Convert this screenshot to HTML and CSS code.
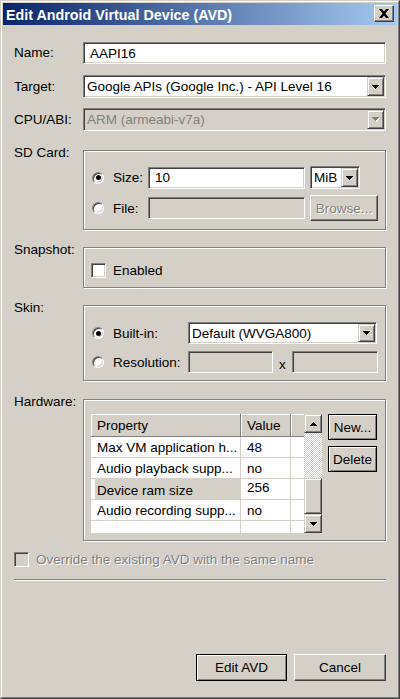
FILE: index.html
```html
<!DOCTYPE html>
<html>
<head>
<meta charset="utf-8">
<title>Edit Android Virtual Device (AVD)</title>
<link rel="stylesheet" href="styles.css">
</head>
<body>
<div class="window">
  <div class="window-inner">
    <div class="titlebar">
      <span class="title">Edit Android Virtual Device (AVD)</span>
      <div class="close-btn">
        <svg width="10" height="9" viewBox="0 0 10 9"><path d="M0 0h3l2 2.5 2-2.5h3l-3.5 4.5 3.5 4.5h-3l-2-2.5-2 2.5h-3l3.5-4.5z" fill="#000"/></svg>
      </div>
    </div>
    <div class="content">
      <div class="row r-name">
        <div class="label">Name:</div>
        <div class="sunken field fill">AAPI16</div>
      </div>
      <div class="row r-target">
        <div class="label">Target:</div>
        <div class="sunken combo fill">
          <span class="combo-text">Google APIs (Google Inc.) - API Level 16</span>
          <span class="raised combo-btn"><svg width="7" height="4" viewBox="0 0 7 4"><path d="M0 0h7v1h-1v1h-1v1h-1v1h-1v-1h-1v-1h-1v-1h-1z" fill="#000"/></svg></span>
        </div>
      </div>
      <div class="row r-cpu">
        <div class="label">CPU/ABI:</div>
        <div class="sunken combo fill disabled">
          <span class="combo-text">ARM (armeabi-v7a)</span>
          <span class="raised combo-btn"><svg width="8" height="5" viewBox="0 0 8 5"><path d="M1 1h7v1h-1v1h-1v1h-1v1h-1v-1h-1v-1h-1v-1h-1z" fill="#fff"/><path d="M0 0h7v1h-1v1h-1v1h-1v1h-1v-1h-1v-1h-1v-1h-1z" fill="#808080"/></svg></span>
        </div>
      </div>

      <div class="row grp-row r-sd">
        <div class="label glabel">SD Card:</div>
        <div class="group sd-group">
          <div class="grow g-size">
            <div class="opt sd-opt"><span class="radio checked"></span><span>Size:</span></div>
            <div class="sunken field sd-field">10</div>
            <div class="sunken combo mib">
              <span class="combo-text">MiB</span>
              <span class="raised combo-btn"><svg width="7" height="4" viewBox="0 0 7 4"><path d="M0 0h7v1h-1v1h-1v1h-1v1h-1v-1h-1v-1h-1v-1h-1z" fill="#000"/></svg></span>
            </div>
          </div>
          <div class="grow g-file">
            <div class="opt sd-opt"><span class="radio"></span><span>File:</span></div>
            <div class="sunken field sd-field disabled"></div>
            <div class="button browse disabled-text">Browse...</div>
          </div>
        </div>
      </div>

      <div class="row grp-row r-snap">
        <div class="label glabel">Snapshot:</div>
        <div class="group snap-group">
          <div class="grow check-row">
            <span class="checkbox"></span><span>Enabled</span>
          </div>
        </div>
      </div>

      <div class="row grp-row r-skin">
        <div class="label glabel">Skin:</div>
        <div class="group skin-group">
          <div class="grow">
            <div class="opt skin-opt"><span class="radio checked"></span><span>Built-in:</span></div>
            <div class="sunken combo skin-combo">
              <span class="combo-text">Default (WVGA800)</span>
              <span class="raised combo-btn"><svg width="7" height="4" viewBox="0 0 7 4"><path d="M0 0h7v1h-1v1h-1v1h-1v1h-1v-1h-1v-1h-1v-1h-1z" fill="#000"/></svg></span>
            </div>
          </div>
          <div class="grow">
            <div class="opt skin-opt"><span class="radio"></span><span>Resolution:</span></div>
            <div class="sunken field res-w disabled"></div>
            <div class="times">x</div>
            <div class="sunken field res-h disabled"></div>
          </div>
        </div>
      </div>

      <div class="row grp-row r-hw">
        <div class="label glabel">Hardware:</div>
        <div class="group hw-group">
          <div class="table-wrap">
            <div class="table">
              <div class="trow thead">
                <div class="tc c1">Property</div>
                <div class="tc c2">Value</div>
                <div class="tc c3"></div>
              </div>
              <div class="trow">
                <div class="tc c1">Max VM application h...</div>
                <div class="tc c2">48</div>
                <div class="tc c3"></div>
              </div>
              <div class="trow">
                <div class="tc c1">Audio playback supp...</div>
                <div class="tc c2">no</div>
                <div class="tc c3"></div>
              </div>
              <div class="trow selected">
                <div class="tc c1"><span class="sel">Device ram size</span></div>
                <div class="tc c2 editing">256</div>
                <div class="tc c3"></div>
              </div>
              <div class="trow">
                <div class="tc c1">Audio recording supp...</div>
                <div class="tc c2">no</div>
                <div class="tc c3"></div>
              </div>
              <div class="trow last">
                <div class="tc c1"></div>
                <div class="tc c2"></div>
                <div class="tc c3"></div>
              </div>
            </div>
            <div class="scrollbar">
              <div class="raised sb-btn"><svg width="7" height="4" viewBox="0 0 7 4"><path d="M3 0h1v1h1v1h1v1h1v1h-7v-1h1v-1h1v-1h1z" fill="#000"/></svg></div>
              <div class="sb-track"></div>
              <div class="raised sb-thumb"></div>
              <div class="raised sb-btn"><svg width="7" height="4" viewBox="0 0 7 4"><path d="M0 0h7v1h-1v1h-1v1h-1v1h-1v-1h-1v-1h-1v-1h-1z" fill="#000"/></svg></div>
            </div>
          </div>
          <div class="hw-buttons">
            <div class="button default">New...</div>
            <div class="button default">Delete</div>
          </div>
        </div>
      </div>

      <div class="override">
        <span class="checkbox disabled"></span><span class="disabled-text">Override the existing AVD with the same name</span>
      </div>
      <div class="separator"></div>
      <div class="actions">
        <div class="button default action">Edit AVD</div>
        <div class="button action cancel">Cancel</div>
      </div>
    </div>
  </div>
</div>
</body>
</html>
```

FILE: styles.css
```css
* { box-sizing: border-box; }
html, body { margin: 0; padding: 0; }
body {
  width: 400px;
  height: 699px;
  overflow: hidden;
  background: #d4d0c8;
  font-family: "Liberation Sans", Arial, sans-serif;
  font-size: 13.5px;
  color: #000;
}

.window {
  width: 400px;
  height: 699px;
  border: 1px solid;
  border-color: #d4d0c8 #404040 #404040 #d4d0c8;
  background: #d4d0c8;
  display: flex;
  flex-direction: column;
}
.window-inner {
  flex: 1;
  border: 1px solid;
  border-color: #fff #808080 #808080 #fff;
  padding: 1px;
  display: flex;
  flex-direction: column;
}

.titlebar {
  height: 22px;
  background: linear-gradient(to right, #0a246a, #a6caf0);
  display: flex;
  align-items: flex-start;
  justify-content: space-between;
  padding-left: 3px;
}
.title {
  color: #fff;
  font-weight: bold;
  font-size: 14.3px;
  line-height: 20px;
  padding-top: 2px;
  white-space: nowrap;
}
.close-btn {
  width: 20px;
  height: 17px;
  margin: 2px 3px 0 0;
  background: #d4d0c8;
  border: 1px solid;
  border-color: #fff #404040 #404040 #fff;
  box-shadow: inset -1px -1px #808080;
  display: flex;
  align-items: center;
  justify-content: center;
}

.content {
  padding: 0 11px;
  display: flex;
  flex-direction: column;
}

.row {
  display: flex;
  align-items: center;
}
.label {
  width: 69px;
  flex-shrink: 0;
  line-height: 16px;
  white-space: nowrap;
}
.fill { flex: 1; }
.grp-row { align-items: flex-start; }
.glabel { margin-top: -5px; }

.r-name { margin-top: 17px; }
.r-target { margin-top: 11px; }
.r-cpu { margin-top: 10px; }
.r-sd { margin-top: 19px; }
.r-snap { margin-top: 17px; }
.r-skin { margin-top: 17px; }
.r-hw { margin-top: 18px; }

/* sunken controls */
.sunken {
  background: #fff;
  border: 1px solid;
  border-color: #808080 #fff #fff #808080;
  box-shadow: inset 1px 1px #404040, inset -1px -1px #d4d0c8;
  padding: 1px;
  white-space: nowrap;
  overflow: hidden;
  flex-shrink: 0;
}
.sunken.fill { flex: 1 1 auto; }
.sunken.disabled { background: #d4d0c8; color: #808080; }

.field {
  height: 22px;
  display: flex;
  align-items: center;
  padding-left: 6px;
}
.combo {
  height: 23px;
  display: flex;
  align-items: stretch;
}
.combo-text {
  flex: 1;
  display: flex;
  align-items: center;
  padding-left: 2px;
  overflow: hidden;
}
.raised {
  background: #d4d0c8;
  border: 1px solid;
  border-color: #d4d0c8 #404040 #404040 #d4d0c8;
  box-shadow: inset 1px 1px #fff, inset -1px -1px #808080;
}
.combo-btn {
  width: 17px;
  flex-shrink: 0;
  display: flex;
  align-items: center;
  justify-content: center;
}

/* group boxes */
.group {
  flex: 1;
  border: 1px solid #808080;
  box-shadow: inset 1px 1px #fff, 1px 1px #fff;
  display: flex;
  flex-direction: column;
}
.grow {
  display: flex;
  align-items: center;
}
.opt {
  display: flex;
  align-items: center;
  gap: 9px;
  flex-shrink: 0;
}

.sd-group {
  height: 80px;
  padding: 15px 0 0 8px;
  gap: 6px;
}
.g-size { height: 23px; }
.g-file { height: 26px; }
.sd-opt { width: 56px; }
.sd-field { width: 157px; }
.mib { width: 50px; margin-left: 5px; }
.browse { width: 68px; height: 26px; margin-left: 5px; }

.snap-group {
  height: 41px;
  padding: 15px 0 0 7px;
}
.check-row { gap: 7px; height: 15px; }

.skin-group {
  height: 76px;
  padding: 16px 0 0 8px;
  gap: 7px;
}
.skin-group .grow { height: 22px; }
.skin-opt { width: 96px; }
.skin-combo { width: 189px; height: 22px; }
.res-w { width: 85px; }
.res-h { width: 86px; }
.times { width: 19px; padding-left: 6px; padding-top: 4px; }

.radio {
  width: 12px;
  height: 12px;
  border-radius: 50%;
  background: #fff;
  border: 1px solid;
  border-color: #808080 #fff #fff #808080;
  box-shadow: inset 1px 1px #404040, inset -1px -1px #d4d0c8;
  display: flex;
  align-items: center;
  justify-content: center;
  flex-shrink: 0;
}
.radio.checked::after {
  content: "";
  width: 5px;
  height: 5px;
  border-radius: 50%;
  background: #000;
}
.checkbox {
  width: 15px;
  height: 15px;
  background: #fff;
  border: 1px solid;
  border-color: #808080 #fff #fff #808080;
  box-shadow: inset 1px 1px #404040, inset -1px -1px #d4d0c8;
  flex-shrink: 0;
}
.checkbox.disabled { background: #d4d0c8; }

/* hardware */
.hw-group {
  height: 142px;
  padding: 14px 0 0 7px;
  flex-direction: row;
  align-items: flex-start;
  gap: 6px;
}
.table-wrap {
  display: flex;
  height: 119px;
}
.table {
  width: 213px;
  background: #fff;
  display: flex;
  flex-direction: column;
  overflow: hidden;
}
.trow {
  display: flex;
  height: 21px;
  flex-shrink: 0;
  border-bottom: 1px solid #d4d0c8;
}
.trow.thead {
  height: 23px;
  background: #d4d0c8;
  border-bottom: 1px solid #808080;
}
.trow.last { border-bottom: none; }
.tc {
  display: flex;
  align-items: center;
  padding-left: 6px;
  white-space: nowrap;
  overflow: hidden;
  border-right: 1px solid #d4d0c8;
}
.thead .tc {
  border-right: 1px solid #808080;
  box-shadow: inset 1px 1px #fff;
}
.c1 { width: 150px; }
.c2 { width: 50px; }
.c3 { width: 13px; border-right: none; }
.thead .c3 { border-right: none; }
.selected .c1 { padding-left: 4px; }
.sel {
  flex: 1;
  align-self: stretch;
  display: flex;
  align-items: center;
  padding-left: 2px;
  padding-top: 2px;
  background: #d4d0c8;
}
.editing { padding-bottom: 3px; }

.scrollbar {
  width: 18px;
  display: flex;
  flex-direction: column;
}
.sb-btn {
  height: 19px;
  display: flex;
  align-items: center;
  justify-content: center;
}
.sb-track {
  height: 45px;
  background: repeating-conic-gradient(#fff 0 25%, #d4d0c8 0 50%) 0 0 / 2px 2px;
}
.sb-thumb { height: 36px; }

.hw-buttons {
  display: flex;
  flex-direction: column;
  gap: 6px;
}
.hw-buttons .button { width: 49px; height: 26px; }

/* buttons */
.button {
  background: #d4d0c8;
  border: 1px solid;
  border-color: #fff #404040 #404040 #fff;
  box-shadow: inset -1px -1px #808080;
  display: flex;
  align-items: center;
  justify-content: center;
  white-space: nowrap;
  flex-shrink: 0;
}
.button.default {
  border-color: #000;
  box-shadow: inset 1px 1px #fff, inset -1px -1px #808080;
}
.disabled-text {
  color: #808080;
  text-shadow: 1px 1px #fff;
}

.override {
  margin-top: 11px;
  display: flex;
  align-items: center;
  gap: 7px;
  height: 15px;
}
.separator {
  margin-top: 12px;
  border-top: 1px solid #808080;
  border-bottom: 1px solid #fff;
}
.actions {
  margin-top: 73px;
  display: flex;
  justify-content: flex-end;
  gap: 7px;
}
.action { height: 27px; }
.action.default { width: 91px; }
.action.cancel { width: 92px; }
```
